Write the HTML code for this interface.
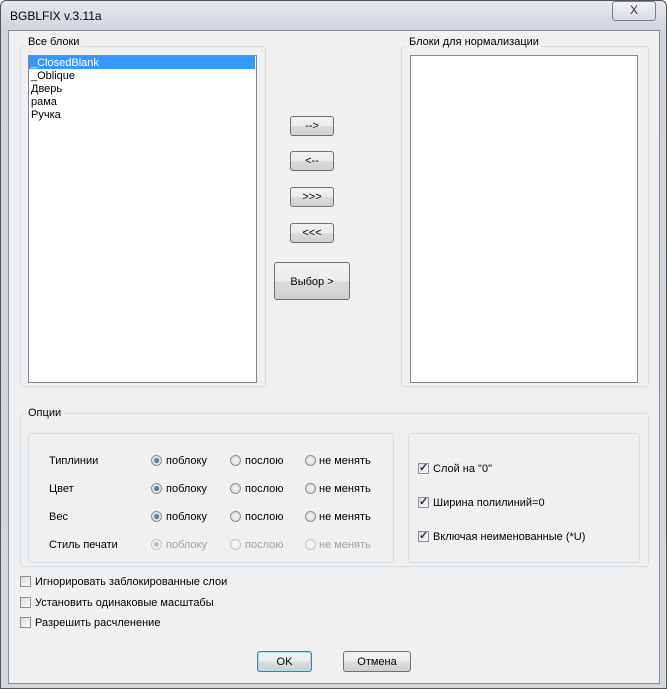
<!DOCTYPE html>
<html><head><meta charset="utf-8"><style>
body{margin:0;width:667px;height:689px;overflow:hidden;background:#fff;font-family:"Liberation Sans",sans-serif;font-size:11px;color:#000;position:relative}
.a{position:absolute}
.frame{left:0;top:0;width:665px;height:687px;border:1px solid #555;border-radius:6px 6px 0 0;background:linear-gradient(#e6e9ed,#cfd5dc 30px,#d3d8de);}
.client{left:8px;top:30px;width:650px;height:652px;background:#f0f0f0;border:1px solid #8a8f96}
.gb{border:1px solid #d5dfe5;border-radius:3px}
.lbl{background:#f0f0f0;padding:0 2px}
.lb{background:#fff;border:1px solid #828790}
.btn{border:1px solid #707070;border-radius:3px;background:linear-gradient(#f2f2f2,#ebebeb 50%,#dddddd 51%,#cfcfcf);text-align:center;box-sizing:border-box}
.rad{width:11px;height:11px;border-radius:50%;border:1px solid #8e8f8f;background:radial-gradient(#f4f4f4,#d8d8d8);box-sizing:border-box}
.rad.on::after{content:"";position:absolute;left:2px;top:2px;width:5px;height:5px;border-radius:50%;background:radial-gradient(circle at 40% 40%,#5ea5d4,#104b6e)}
.rad.dis{border-color:#c5c5c5;background:#f4f4f4}
.rad.dis.on::after{background:#bbb}
.cb{width:11px;height:11px;border:1px solid #8e8f8f;background:linear-gradient(135deg,#dcdcdc,#fafafa);box-sizing:border-box;font-size:11px;line-height:9px;text-align:center;color:#1c2f66;font-weight:bold}
.gray{color:#a0a0a0}
</style></head><body>
<div class="a frame"></div>
<div class="a" style="left:10px;top:9px;font-size:12px">BGBLFIX v.3.11a</div>
<div class="a" style="left:612px;top:1px;width:42px;height:18px;border:1px solid #7a7f86;border-radius:3px;background:linear-gradient(#f2f3f5,#d8dce1);text-align:center;font-size:12px;line-height:17px;color:#333">X</div>
<div class="a client"></div>

<div class="a gb" style="left:20px;top:46px;width:244px;height:339px"></div>
<div class="a lbl" style="left:26px;top:36px">Все блоки</div>
<div class="a lb" style="left:28px;top:55px;width:227px;height:326px"></div>
<div class="a" style="left:29px;top:56px;width:226px;height:13px;background:#3399ff"></div>
<div class="a" style="left:31px;top:57px;line-height:13px;color:#fff">_ClosedBlank</div>
<div class="a" style="left:31px;top:70px;line-height:13px">_Oblique<br>Дверь<br>рама<br>Ручка</div>

<div class="a gb" style="left:401px;top:46px;width:246px;height:339px"></div>
<div class="a lbl" style="left:407px;top:36px">Блоки для нормализации</div>
<div class="a lb" style="left:410px;top:55px;width:226px;height:326px"></div>

<div class="a btn" style="left:290px;top:116px;width:44px;height:20px;line-height:18px">--&gt;</div>
<div class="a btn" style="left:290px;top:151px;width:44px;height:20px;line-height:18px">&lt;--</div>
<div class="a btn" style="left:290px;top:187px;width:44px;height:20px;line-height:18px">&gt;&gt;&gt;</div>
<div class="a btn" style="left:290px;top:223px;width:44px;height:20px;line-height:18px">&lt;&lt;&lt;</div>
<div class="a btn" style="left:274px;top:262px;width:76px;height:38px;line-height:38px">Выбор &gt;</div>

<div class="a gb" style="left:20px;top:413px;width:627px;height:152px"></div>
<div class="a lbl" style="left:26px;top:407px">Опции</div>
<div class="a gb" style="left:28px;top:433px;width:364px;height:128px"></div>
<div class="a gb" style="left:408px;top:433px;width:230px;height:128px"></div>

<div class="a" style="left:49px;top:455px">Типлинии</div>
<div class="a" style="left:49px;top:483px">Цвет</div>
<div class="a" style="left:49px;top:511px">Вес</div>
<div class="a" style="left:49px;top:539px">Стиль печати</div>

<div class="a rad on" style="left:151px;top:455px"></div><div class="a" style="left:166px;top:455px">поблоку</div>
<div class="a rad" style="left:230px;top:455px"></div><div class="a" style="left:245px;top:455px">послою</div>
<div class="a rad" style="left:305px;top:455px"></div><div class="a" style="left:319px;top:455px">не менять</div>

<div class="a rad on" style="left:151px;top:483px"></div><div class="a" style="left:166px;top:483px">поблоку</div>
<div class="a rad" style="left:230px;top:483px"></div><div class="a" style="left:245px;top:483px">послою</div>
<div class="a rad" style="left:305px;top:483px"></div><div class="a" style="left:319px;top:483px">не менять</div>

<div class="a rad on" style="left:151px;top:511px"></div><div class="a" style="left:166px;top:511px">поблоку</div>
<div class="a rad" style="left:230px;top:511px"></div><div class="a" style="left:245px;top:511px">послою</div>
<div class="a rad" style="left:305px;top:511px"></div><div class="a" style="left:319px;top:511px">не менять</div>

<div class="a rad dis on" style="left:151px;top:539px"></div><div class="a gray" style="left:166px;top:539px">поблоку</div>
<div class="a rad dis" style="left:230px;top:539px"></div><div class="a gray" style="left:245px;top:539px">послою</div>
<div class="a rad dis" style="left:305px;top:539px"></div><div class="a gray" style="left:319px;top:539px">не менять</div>

<div class="a cb" style="left:418px;top:463px">✓</div><div class="a" style="left:433px;top:463px">Слой на "0"</div>
<div class="a cb" style="left:418px;top:497px">✓</div><div class="a" style="left:433px;top:497px">Ширина полилиний=0</div>
<div class="a cb" style="left:418px;top:531px">✓</div><div class="a" style="left:433px;top:531px">Включая неименованные (*U)</div>

<div class="a cb" style="left:20px;top:576px"></div><div class="a" style="left:35px;top:576px">Игнорировать заблокированные слои</div>
<div class="a cb" style="left:20px;top:597px"></div><div class="a" style="left:35px;top:597px">Установить одинаковые масштабы</div>
<div class="a cb" style="left:20px;top:617px"></div><div class="a" style="left:35px;top:617px">Разрешить расчленение</div>

<div class="a btn" style="left:257px;top:651px;width:55px;height:21px;line-height:20px;border-color:#3c7fb1;box-shadow:inset 0 0 0 1px #a8e0f5">OK</div>
<div class="a btn" style="left:343px;top:651px;width:68px;height:21px;line-height:20px">Отмена</div>
</body></html>
